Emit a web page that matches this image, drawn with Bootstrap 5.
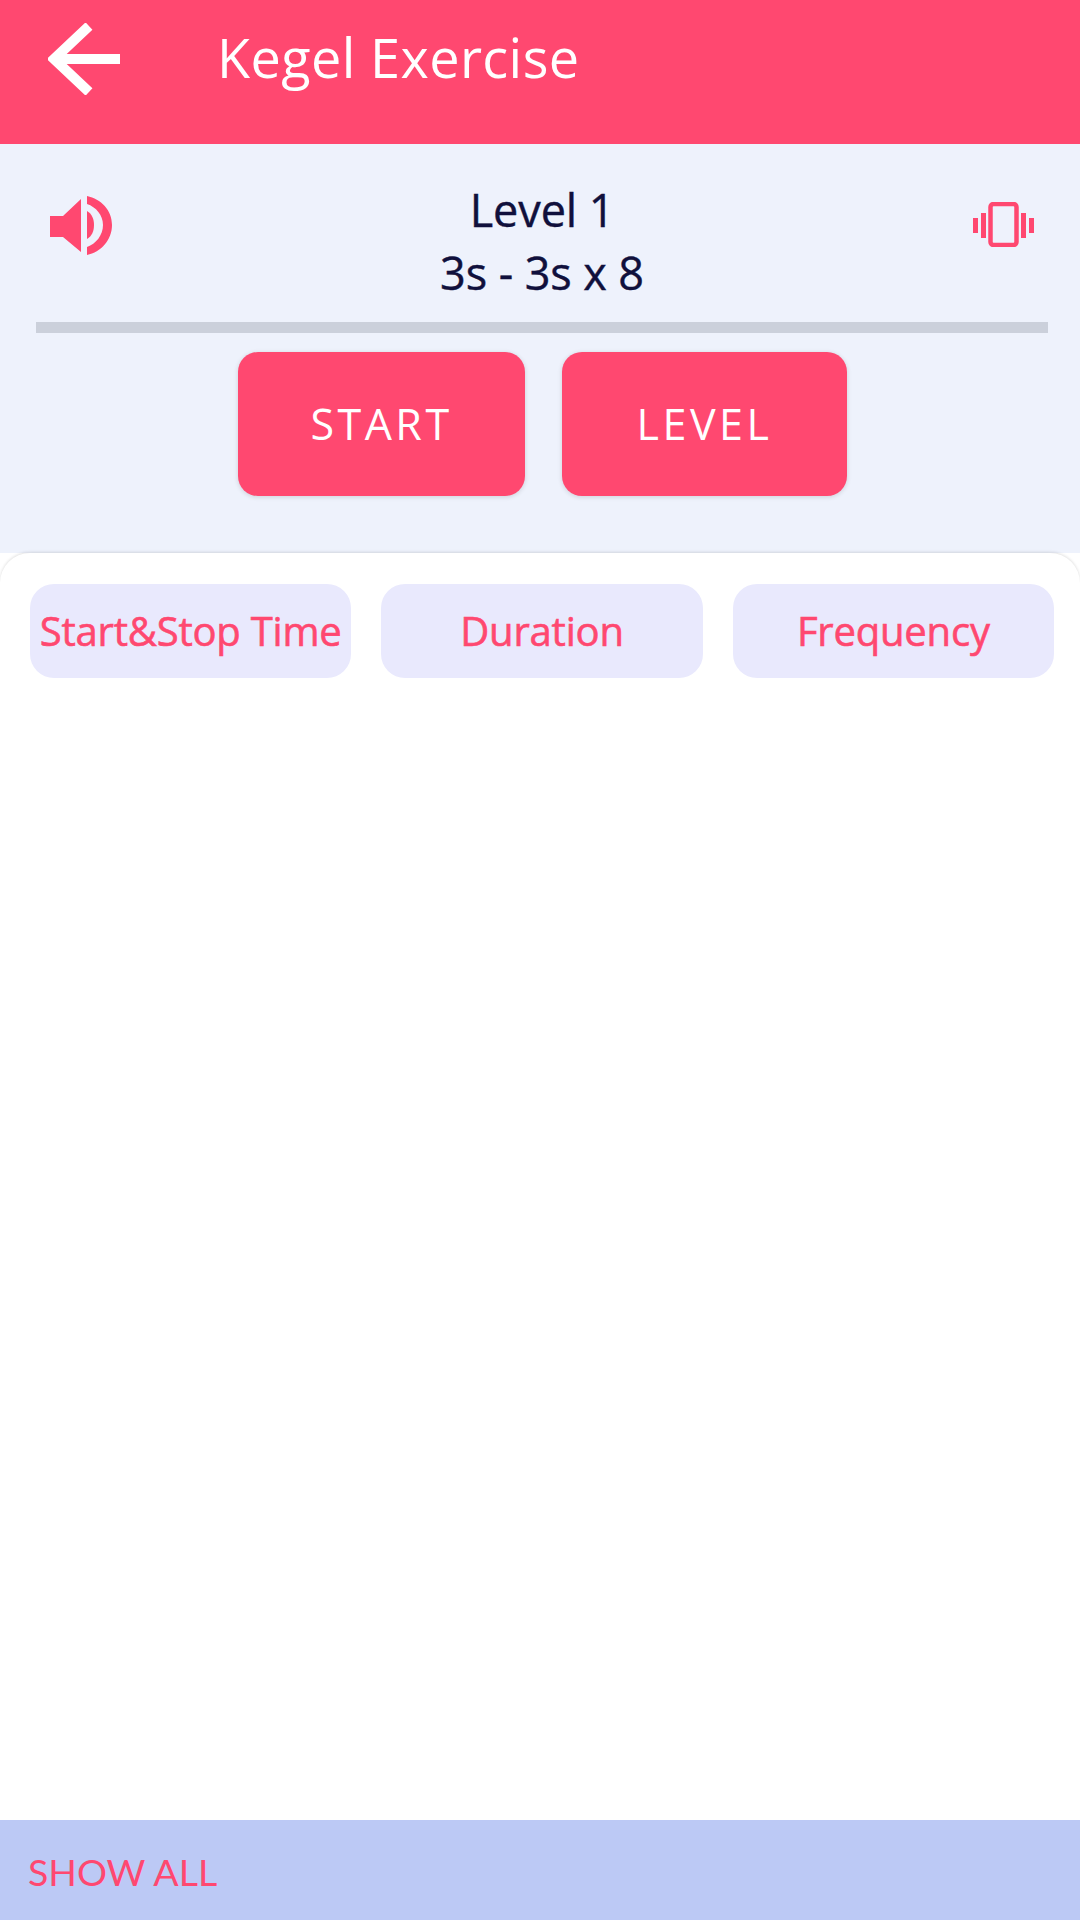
<!DOCTYPE html>
<html lang="en">
<head>
    <meta charset="UTF-8">
    <meta name="viewport" content="width=device-width, initial-scale=1.0">
    <title>Kegel Exercise</title>
    <link rel="stylesheet" href="https://cdn.jsdelivr.net/npm/bootstrap@5.3.0/dist/css/bootstrap.min.css">
    <style>
        html, body { height: 1920px; }
        body { background: #fff; font-family: "Open Sans", "Noto Sans", sans-serif; overflow: hidden; }
        .app-shell { height: 1920px; }
        .top-bar { background: #ff4870; height: 144px; padding: 0 0 26px 48px; color: #fff; }
        .back-link { width: 169px; }
        .top-title { font-size: 54px; line-height: 1; letter-spacing: .4px; font-weight: 400; margin: 0 0 4px; }
        .panel { background: #eef2fc; height: 409px; padding: 0 32px 0 36px; }
        .level-row { height: 178px; }
        .level-text { font-size: 45px; line-height: 63px; color: #10103c; padding-top: 34px; letter-spacing: -.1px; -webkit-text-stroke: .4px #10103c; }
        .side-icon { width: 100px; padding: 52px 0 0 14px; }
        .side-icon-right { padding: 58px 14px 0 0; }
        .progress-line { height: 11px; background: #cbd0db; }
        .action-row { margin-top: 19px; gap: 37px; padding-left: 1px; }
        .action-btn { background: #ff4870; color: #fff; border: 0; border-radius: 20px; width: 287px; height: 144px; font-size: 43px; letter-spacing: 3.5px; box-shadow: 0 1px 5px rgba(0,0,0,.14); }
        .action-btn + .action-btn { width: 285px; }
        .action-btn:hover { background: #ff4870; color: #fff; }
        .sheet { background: #fff; border-radius: 30px 30px 0 0; box-shadow: 0 -1px 3px rgba(0,0,0,.12); padding: 31px 26px 0 30px; gap: 30px; }
        .tab-pill { flex: 1 1 0; height: 94px; background: #e9e9fd; color: #ff4870; border-radius: 24px; font-size: 40px; letter-spacing: -.2px; -webkit-text-stroke: .6px #ff4870; white-space: nowrap; }
        .bottom-bar { height: 100px; background: #bcc9f5; color: #ff4870; padding: 4px 0 0 28px; font-family: "Lato", sans-serif; font-size: 37.5px; }
    </style>
</head>
<body>
    <div class="app-shell d-flex flex-column">
        <div class="top-bar d-flex align-items-center">
            <a class="back-link d-block" href="#" aria-label="Back">
                <svg width="72" height="72" viewBox="0 0 72 72" class="d-block"><path d="M72 36H6M41 3 6 36l35 33" fill="none" stroke="#fff" stroke-width="10"/></svg>
            </a>
            <h1 class="top-title">Kegel Exercise</h1>
        </div>

        <div class="panel">
            <div class="level-row d-flex justify-content-between">
                <div class="side-icon">
                    <svg width="62" height="59" viewBox="0 0 62 59" class="d-block"><path d="M0 20h13L31 3v53L13 41H0z" fill="#ff4870"/><path d="M37 0c14 3 25 14 25 29S51 56 37 59v-8c9-3 16-12 16-22S46 11 37 8z" fill="#ff4870"/><path d="M37 15c5 3 7 8 7 14s-2 11-7 14z" fill="#ff4870"/></svg>
                </div>
                <div class="level-text text-center flex-grow-1">Level 1<br>3s - 3s x 8</div>
                <div class="side-icon side-icon-right d-flex justify-content-end">
                    <svg width="61" height="45" viewBox="0 0 61 45" class="d-block"><rect x="17.5" y="2" width="26" height="41" rx="3" fill="none" stroke="#ff4870" stroke-width="4.5"/><path d="M8 11h5v25H8zM0 16h5v15H0zM48 11h5v25h-5zM56 16h5v15h-5z" fill="#ff4870"/></svg>
                </div>
            </div>
            <div class="progress-line"></div>
            <div class="action-row d-flex justify-content-center">
                <button class="btn action-btn">START</button>
                <button class="btn action-btn">LEVEL</button>
            </div>
        </div>

        <div class="sheet d-flex flex-grow-1 align-items-start">
            <div class="tab-pill d-flex align-items-center justify-content-center">Start&amp;Stop Time</div>
            <div class="tab-pill d-flex align-items-center justify-content-center">Duration</div>
            <div class="tab-pill d-flex align-items-center justify-content-center">Frequency</div>
        </div>

        <div class="bottom-bar d-flex align-items-center">SHOW ALL</div>
    </div>
    <script src="https://cdn.jsdelivr.net/npm/bootstrap@5.3.0/dist/js/bootstrap.bundle.min.js"></script>
</body>
</html>
